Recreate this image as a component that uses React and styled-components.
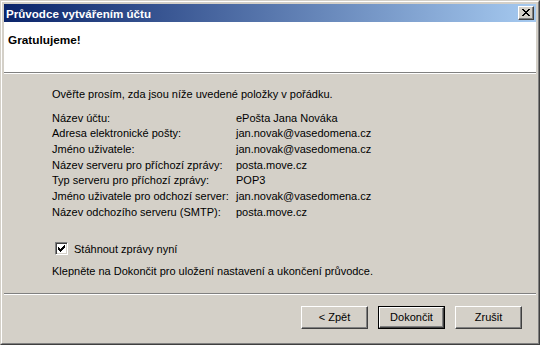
import React from "react";
import styled, { createGlobalStyle } from "styled-components";

const Global = createGlobalStyle`
  html, body { margin: 0; padding: 0; background: #d4d0c8; }
  body { font-family: "Liberation Sans", Arial, sans-serif; font-size: 11px; color: #000; }
  * { box-sizing: border-box; }
`;

const Frame = styled.div`
  width: 540px;
  height: 345px;
  border: 1px solid;
  border-color: #d4d0c8 #404040 #404040 #d4d0c8;
  background: #d4d0c8;
`;

const FrameInner = styled.div`
  height: 100%;
  border: 1px solid;
  border-color: #ffffff #808080 #808080 #ffffff;
  padding: 2px;
  display: flex;
  flex-direction: column;
`;

const TitleBar = styled.div`
  height: 18px;
  flex: none;
  display: flex;
  align-items: center;
  justify-content: space-between;
  padding: 0 2px 0 2px;
  background: linear-gradient(to right, #0a246a, #a6caf0);
`;

const TitleText = styled.span`
  color: #fff;
  font-weight: bold;
  font-size: 11.6px;
`;

const CloseButton = styled.div`
  width: 16px;
  height: 14px;
  background: #d4d0c8;
  border: 1px solid;
  border-color: #ffffff #404040 #404040 #ffffff;
  box-shadow: inset -1px -1px 0 #808080;
  display: flex;
  align-items: flex-start;
  padding: 2px 0 0 3px;
`;

const Client = styled.div`
  flex: 1;
  display: flex;
  flex-direction: column;
`;

const Header = styled.div`
  height: 50px;
  flex: none;
  background: #fff;
  padding: 11px 0 0 4px;
  font-weight: bold;
  font-size: 11.8px;
`;

const Etched = styled.div`
  height: 2px;
  flex: none;
  border-top: 1px solid #808080;
  border-bottom: 1px solid #ffffff;
`;

const Body = styled.div`
  flex: 1;
  padding: 13px 0 0 48px;
  display: flex;
  flex-direction: column;
`;

const Para = styled.div`
  line-height: 15.67px;
  margin-top: ${(p) => p.$mt || 0}px;
`;

const Grid = styled.div`
  display: grid;
  grid-template-columns: 184px auto;
  line-height: 15.67px;
  margin-top: 8px;
`;

const CheckRow = styled.label`
  display: flex;
  align-items: center;
  gap: 6px;
  margin-top: 22px;
  margin-left: 3px;
  height: 13px;
`;

const CheckBox = styled.span`
  width: 13px;
  height: 13px;
  flex: none;
  border: 1px solid;
  border-color: #808080 #ffffff #ffffff #808080;
  background: #fff;
  box-shadow: inset 1px 1px 0 #404040, inset -1px -1px 0 #d4d0c8;
  display: flex;
  padding: 2px 0 0 2px;
`;

const Footer = styled.div`
  height: 46px;
  flex: none;
  display: flex;
  justify-content: flex-end;
  align-items: flex-start;
  gap: 10px;
  padding: 11px 14px 0 0;
`;

const ButtonOuter = styled.div`
  width: 67px;
  height: 23px;
  border: 1px solid ${(p) => (p.$default ? "#000" : "transparent")};
  display: flex;
`;

const Button = styled.div`
  flex: 1;
  display: flex;
  align-items: center;
  justify-content: center;
  background: #d4d0c8;
  border: 1px solid;
  border-color: #ffffff #404040 #404040 #ffffff;
  box-shadow: inset -1px -1px 0 #808080;
  ${(p) => (p.$default ? "" : "margin: -1px;")}
  font-size: 11px;
  padding-bottom: 1px;
`;

const rows = [
  ["Název účtu:", "ePošta Jana Nováka"],
  ["Adresa elektronické pošty:", "jan.novak@vasedomena.cz"],
  ["Jméno uživatele:", "jan.novak@vasedomena.cz"],
  ["Název serveru pro příchozí zprávy:", "posta.move.cz"],
  ["Typ serveru pro příchozí zprávy:", "POP3"],
  ["Jméno uživatele pro odchozí server:", "jan.novak@vasedomena.cz"],
  ["Název odchozího serveru (SMTP):", "posta.move.cz"],
];

const CloseGlyph = () => (
  <svg width="8" height="7" viewBox="0 0 8 7" shapeRendering="crispEdges">
    {[
      [0, 0, 2], [6, 0, 2],
      [1, 1, 2], [5, 1, 2],
      [2, 2, 4],
      [3, 3, 2],
      [2, 4, 4],
      [1, 5, 2], [5, 5, 2],
      [0, 6, 2], [6, 6, 2],
    ].map(([x, y, w], i) => (
      <rect key={i} x={x} y={y} width={w} height={1} fill="#000" />
    ))}
  </svg>
);

const CheckGlyph = () => (
  <svg width="7" height="7" viewBox="0 0 7 7" shapeRendering="crispEdges">
    {[
      [6, 0, 1], [5, 1, 2], [0, 2, 1], [4, 2, 3], [0, 3, 2], [3, 3, 3],
      [0, 4, 5], [1, 5, 3], [2, 6, 1],
    ].map(([x, y, w], i) => (
      <rect key={i} x={x} y={y} width={w} height={1} fill="#000" />
    ))}
  </svg>
);

export default function App() {
  return (
    <>
      <Global />
      <Frame>
        <FrameInner>
          <TitleBar>
            <TitleText>Průvodce vytvářením účtu</TitleText>
            <CloseButton>
              <CloseGlyph />
            </CloseButton>
          </TitleBar>
          <Client>
            <Header>Gratulujeme!</Header>
            <Etched />
            <Body>
              <Para>Ověřte prosím, zda jsou níže uvedené položky v pořádku.</Para>
              <Grid>
                {rows.map(([k, v]) => (
                  <React.Fragment key={k}>
                    <span>{k}</span>
                    <span>{v}</span>
                  </React.Fragment>
                ))}
              </Grid>
              <CheckRow>
                <CheckBox>
                  <CheckGlyph />
                </CheckBox>
                <span>Stáhnout zprávy nyní</span>
              </CheckRow>
              <Para $mt={9}>Klepněte na Dokončit pro uložení nastavení a ukončení průvodce.</Para>
            </Body>
            <Etched />
            <Footer>
              <ButtonOuter>
                <Button>&lt; Zpět</Button>
              </ButtonOuter>
              <ButtonOuter $default>
                <Button $default>Dokončit</Button>
              </ButtonOuter>
              <ButtonOuter>
                <Button>Zrušit</Button>
              </ButtonOuter>
            </Footer>
          </Client>
        </FrameInner>
      </Frame>
    </>
  );
}
